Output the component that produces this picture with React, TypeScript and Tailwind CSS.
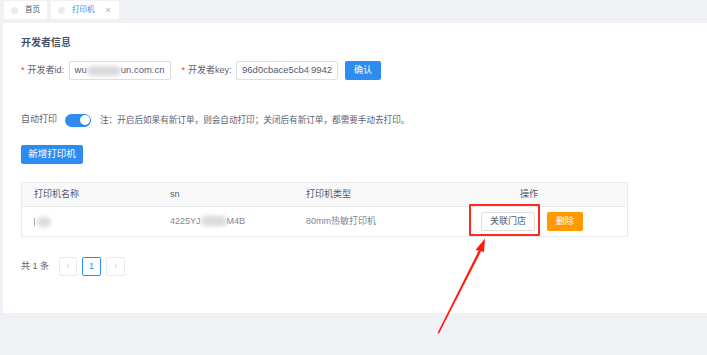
import React from 'react';

const font = "font-['Liberation_Sans','Noto_Sans_CJK_SC',sans-serif]";

const Tab: React.FC<{ label: string; active?: boolean; closable?: boolean; w: string }> = ({ label, active, closable, w }) => (
  <div className={`h-[18px] ${w} bg-white rounded-[2px] flex items-center pl-[7px] gap-[7px] whitespace-nowrap`}>
    <span className="w-[7px] h-[7px] rounded-full bg-[#e8eaec] shrink-0" />
    <span className={`text-[7.5px] ${active ? 'text-[#2d8cf0]' : 'text-[#515a6e]'}`}>{label}</span>
    {closable && <span className="ml-[4px] text-[9px] text-[#aaa] leading-none">×</span>}
  </div>
);

const Blur: React.FC<{ w: string }> = ({ w }) => (
  <span className={`inline-block ${w} h-[10px] bg-[#dadadc] blur-[2px] rounded-full align-middle`} />
);

export default function App() {
  return (
    <div className={`relative w-[707px] h-[355px] bg-[#f0f1f5] flex flex-col overflow-hidden ${font}`}>
      {/* tabs */}
      <div className="h-[23px] flex items-start gap-[4px] pl-[4px] pt-[1px]">
        <Tab label="首页" w="w-[43px]" />
        <Tab label="打印机" active closable w="w-[68px]" />
      </div>

      {/* panel */}
      <div className="ml-[3px] h-[290px] bg-white pl-[18px] pt-[14px] text-[9px] text-[#5c6270]">
        <div className="text-[10px] font-bold text-[#17233d]/80 leading-[12px]">开发者信息</div>

        {/* developer row */}
        <div className="mt-[12px] flex items-center h-[19px]">
          <span className="text-[#ed4014] mr-[3px]">*</span>
          <span className="w-[41px]">开发者id:</span>
          <div className="w-[102px] h-[19px] border border-[#dcdee2] rounded-[2px] px-[5px] flex items-center text-[9.5px] text-[#515a6e] overflow-hidden whitespace-nowrap">
            wu<Blur w="w-[34px]" />un.com.cn
          </div>
          <span className="ml-[11px] text-[#ed4014] mr-[3px]">*</span>
          <span className="w-[48px]">开发者key:</span>
          <div className="w-[102px] h-[19px] border border-[#dcdee2] rounded-[2px] px-[5px] flex items-center text-[9.5px] text-[#515a6e] overflow-hidden whitespace-nowrap">
            96d0cbace5cb4<Blur w="w-[22px]" />9942
          </div>
          <button className="ml-[7px] w-[36px] h-[19px] bg-[#2d8cf0] rounded-[2px] text-white text-[9px]">确认</button>
        </div>

        {/* auto print */}
        <div className="mt-[33px] flex items-center h-[14px]">
          <span className="w-[44px]">自动打印</span>
          <div className="w-[26px] h-[13px] rounded-full bg-[#2d8cf0] flex items-center justify-end pr-[1.5px]">
            <span className="w-[10px] h-[10px] rounded-full bg-white" />
          </div>
          <span className="ml-[9px] text-[8.6px]">注：开启后如果有新订单，则会自动打印；关闭后有新订单，都需要手动去打印。</span>
        </div>

        <button className="mt-[18px] w-[62px] h-[19px] bg-[#2d8cf0] rounded-[2px] text-white text-[9.5px] block">新增打印机</button>

        {/* table */}
        <div className="mt-[18px] w-[607px] border border-[#e8eaec]">
          <div className="grid grid-cols-[136px_136px_137px_1fr] h-[24px] bg-[#f8f8f9] border-b border-[#e8eaec] items-center text-[9px] text-[#515a6e]">
            <span className="pl-[12px]">打印机名称</span>
            <span className="pl-[12px]">sn</span>
            <span className="pl-[12px]">打印机类型</span>
            <span className="text-center">操作</span>
          </div>
          <div className="grid grid-cols-[136px_136px_137px_1fr] h-[29px] items-center text-[9px] text-[#808695]">
            <span className="pl-[12px] flex items-center">
              <span className="w-[1px] h-[8px] bg-[#aaa] mr-[2px]" />
              <Blur w="w-[14px]" />
            </span>
            <span className="pl-[12px] whitespace-nowrap">4225YJ<Blur w="w-[26px]" />M4B</span>
            <span className="pl-[12px]">80mm热敏打印机</span>
            <div className="flex items-center justify-center gap-[12px] pl-[6px]">
              <div className="relative">
                <button className="w-[54px] h-[19px] border border-[#dcdee2] rounded-[2px] bg-white text-[#515a6e] text-[9px]">关联门店</button>
                <span className="absolute -left-[12px] -top-[8px] w-[71px] h-[32px] border-[2px] border-[#ff2a1f] rounded-[1px]" />
              </div>
              <button className="w-[36px] h-[19px] bg-[#ff9900] rounded-[2px] text-white text-[9px]">删除</button>
            </div>
          </div>
        </div>

        {/* pagination */}
        <div className="mt-[20px] flex items-center h-[19px] text-[9px]">
          <span className="mr-[10px]">共 1 条</span>
          <span className="w-[18px] h-[19px] border border-[#e8eaec] rounded-[2px] flex items-center justify-center text-[#c5c8ce]">‹</span>
          <span className="ml-[5px] w-[19px] h-[19px] border border-[#2d8cf0] rounded-[2px] flex items-center justify-center text-[#2d8cf0]">1</span>
          <span className="ml-[5px] w-[19px] h-[19px] border border-[#e8eaec] rounded-[2px] flex items-center justify-center text-[#c5c8ce]">›</span>
        </div>
      </div>

      {/* red annotation arrow */}
      <svg className="absolute left-0 top-0 pointer-events-none" width="707" height="355">
        <polygon points="437.5,333 479,250 481,251.5 439,333.5" fill="#ff1a0f" />
        <polygon points="485,238.5 475.5,250 484,252" fill="#ff1a0f" />
      </svg>
    </div>
  );
}
